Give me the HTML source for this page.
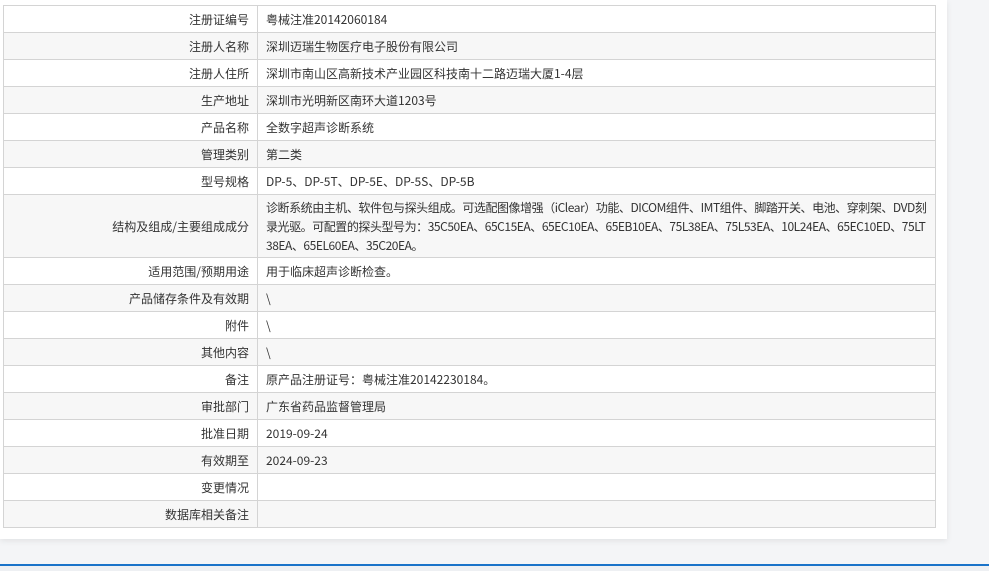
<!DOCTYPE html>
<html><head><meta charset="utf-8"><style>
html,body{margin:0;padding:0;width:989px;height:571px;overflow:hidden;background:#f4f5f7;font-family:"Noto Sans CJK SC","Liberation Sans",sans-serif;font-size:12px;color:#333}
.panel{position:absolute;left:0;top:0;width:947px;height:539px;background:#fff;box-shadow:0 2px 6px rgba(0,0,0,.08)}
table{position:absolute;left:3px;top:5px;width:933px;border-collapse:collapse}
td{border:1px solid #d4d4d4;height:26px;padding:0 8px;line-height:19px}
td.l{width:237px;text-align:right;padding-right:8px}
tr:nth-child(even) td{background:#f7f7f7}
td.tall{height:62px;padding-top:0}
.line{position:absolute;left:0;top:564px;width:989px;height:2px;background:#1a73c9}
.bot{position:absolute;left:0;top:566px;width:989px;height:5px;background:#eef0f3}
</style></head><body>
<div class="panel"></div>
<table>
<tr><td class="l">注册证编号</td><td>粤械注准20142060184</td></tr>
<tr><td class="l">注册人名称</td><td>深圳迈瑞生物医疗电子股份有限公司</td></tr>
<tr><td class="l">注册人住所</td><td>深圳市南山区高新技术产业园区科技南十二路迈瑞大厦1-4层</td></tr>
<tr><td class="l">生产地址</td><td>深圳市光明新区南环大道1203号</td></tr>
<tr><td class="l">产品名称</td><td>全数字超声诊断系统</td></tr>
<tr><td class="l">管理类别</td><td>第二类</td></tr>
<tr><td class="l">型号规格</td><td>DP-5、DP-5T、DP-5E、DP-5S、DP-5B</td></tr>
<tr><td class="l tall">结构及组成/主要组成成分</td><td class="tall" style="word-break:break-all;letter-spacing:-0.45px">诊断系统由主机、软件包与探头组成。可选配图像增强（iClear）功能、DICOM组件、IMT组件、脚踏开关、电池、穿刺架、DVD刻录光驱。可配置的探头型号为：35C50EA、65C15EA、65EC10EA、65EB10EA、75L38EA、75L53EA、10L24EA、65EC10ED、75LT38EA、65EL60EA、35C20EA。</td></tr>
<tr><td class="l">适用范围/预期用途</td><td>用于临床超声诊断检查。</td></tr>
<tr><td class="l">产品储存条件及有效期</td><td>\</td></tr>
<tr><td class="l">附件</td><td>\</td></tr>
<tr><td class="l">其他内容</td><td>\</td></tr>
<tr><td class="l">备注</td><td>原产品注册证号：粤械注准20142230184。</td></tr>
<tr><td class="l">审批部门</td><td>广东省药品监督管理局</td></tr>
<tr><td class="l">批准日期</td><td>2019-09-24</td></tr>
<tr><td class="l">有效期至</td><td>2024-09-23</td></tr>
<tr><td class="l">变更情况</td><td></td></tr>
<tr><td class="l">数据库相关备注</td><td></td></tr>
</table>
<div class="line"></div><div class="bot"></div>
</body></html>
